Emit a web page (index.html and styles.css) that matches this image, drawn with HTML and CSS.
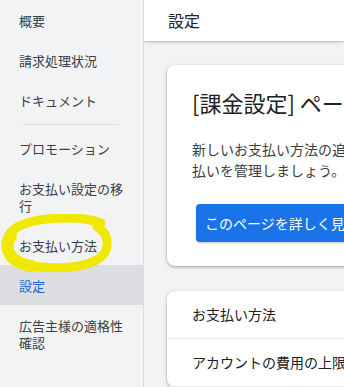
FILE: index.html
```html
<!DOCTYPE html>
<html>
    <head>
        <title>設定</title>
        <link rel="stylesheet" href="styles.css">
    </head>

    <body>
        <nav class="sidebar">
            <a class="navItem">概要</a>
            <a class="navItem">請求処理状況</a>
            <a class="navItem">ドキュメント</a>
            <hr class="navDivider">
            <a class="navItem">プロモーション</a>
            <a class="navItem">お支払い設定の移行</a>
            <a class="navItem">お支払い方法</a>
            <a class="navItem active">設定</a>
            <a class="navItem">広告主様の適格性確認</a>

            <svg class="scribble" width="120" height="64" viewBox="0 0 120 64">
                <path d="M100 9 C 80 1, 30 2, 12 16 C -2 30, 4 50, 40 53 C 72 56, 104 50, 106 32 C 107 22, 102 16, 96 13"
                      fill="none" stroke="#f0e800" stroke-width="9" stroke-linecap="round"/>
                <path d="M10 22 C 2 34, 8 48, 30 52" fill="none" stroke="#f0e800" stroke-width="12" stroke-linecap="round"/>
            </svg>
        </nav>

        <main>
            <header class="topBar">設定</header>

            <div class="content">
                <div class="card intro">
                    <h1>[課金設定] ページの概要</h1>
                    <p>新しいお支払い方法の追加やお支払い設定の更新など、お支<br>払いを管理しましょう。</p>
                    <button>このページを詳しく見る</button>
                </div>

                <div class="card list">
                    <div class="listRow">お支払い方法</div>
                    <div class="listRow">アカウントの費用の上限</div>
                </div>
            </div>
        </main>
    </body>
</html>
```

FILE: styles.css
```css
body {
    margin: 0;
    display: flex;
    height: 100vh;
    overflow: hidden;
    font-family: "Noto Sans CJK JP", "Noto Sans", sans-serif;
    background-color: #f1f3f4;
    color: #202124;
}

.sidebar {
    position: relative;
    width: 143px;
    flex-shrink: 0;
    border-right: 1px solid #dadce0;
    background-color: #f1f3f4;
}

.navItem {
    display: block;
    padding: 11.5px 12px 11.5px 19px;
    font-size: 13px;
    line-height: 17px;
    color: #3c4043;
}

.navItem.active {
    background-color: #dcdde0;
    color: #1967d2;
}

.navDivider {
    margin: 4px 24px 3px 23px;
    border: none;
    border-top: 1px solid #dadce0;
}

.scribble {
    position: absolute;
    left: 1px;
    top: 214px;
}

main {
    flex: 1;
    overflow: hidden;
}

.topBar {
    height: 41px;
    box-sizing: border-box;
    padding: 8px 24px;
    font-size: 16px;
    line-height: 24px;
    background-color: #fff;
    box-shadow: 0 1px 3px rgba(60, 64, 67, 0.35);
}

.content {
    padding: 24px 0 0 23px;
}

.card {
    width: 420px;
    background-color: #fff;
    border-radius: 8px;
    box-shadow: 0 1px 2px rgba(60, 64, 67, 0.3), 0 1px 3px 1px rgba(60, 64, 67, 0.15);
}

.intro {
    padding: 23px 25px 24px 25px;
    box-sizing: border-box;
}

.intro h1 {
    margin: 0;
    font-size: 22px;
    font-weight: 400;
    line-height: 28px;
    white-space: nowrap;
}

.intro p {
    margin: 23px 0;
    font-size: 14px;
    line-height: 21px;
    color: #3c4043;
    white-space: nowrap;
}

.intro button {
    margin-left: 4px;
    height: 38px;
    padding: 0 9px;
    font-family: inherit;
    font-size: 14px;
    color: #fff;
    background-color: #1a73e8;
    border: none;
    border-radius: 4px;
    box-shadow: 0 1px 2px rgba(60, 64, 67, 0.3);
    white-space: nowrap;
}

.list {
    margin-top: 25px;
}

.listRow {
    padding: 0 25px;
    height: 47px;
    line-height: 47px;
    font-size: 14px;
    white-space: nowrap;
    border-bottom: 1px solid #e8eaed;
}
```
